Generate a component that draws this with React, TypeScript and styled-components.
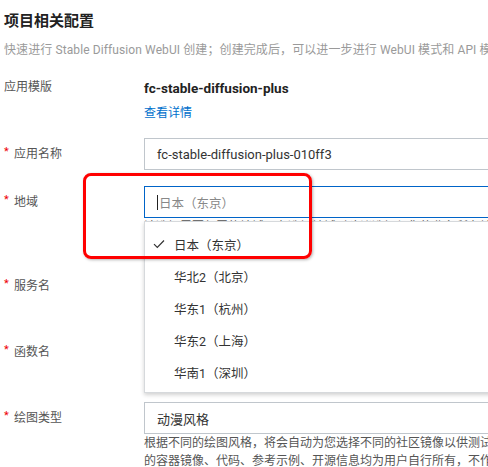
import React from 'react';
import styled, { createGlobalStyle } from 'styled-components';

const GlobalStyle = createGlobalStyle`
  html, body {
    margin: 0;
    padding: 0;
    background: #fff;
    overflow: hidden;
  }
  body {
    font-family: Roboto, "Noto Sans CJK SC", sans-serif;
    color: #333;
  }
`;

const Page = styled.div`
  position: relative;
  width: 820px;
  padding: 10px 0 0 4px;
`;

const Title = styled.h2`
  margin: 0;
  font-size: 15px;
  line-height: 22px;
  font-weight: 700;
  color: #222;
`;

const Subtitle = styled.p`
  margin: 9px 0 0 0;
  font-size: 12px;
  line-height: 18px;
  letter-spacing: 0.1px;
  color: #9a9a9a;
  white-space: nowrap;
`;

const Form = styled.div`
  margin-top: 19px;
`;

const Row = styled.div<{ $gap?: number }>`
  display: grid;
  grid-template-columns: 140px 600px;
  margin-bottom: ${p => p.$gap ?? 16}px;
`;

const Label = styled.div<{ $tall?: boolean }>`
  font-size: 12px;
  line-height: ${p => (p.$tall ? 32 : 18)}px;
  color: #555;
  white-space: nowrap;
`;

const Required = styled.span`
  display: inline-block;
  width: 10px;
  color: #e00;
  font-size: 11px;
  vertical-align: top;
  line-height: 28px;
`;

const Control = styled.div`
  position: relative;
`;

const StaticValue = styled.div`
  margin-top: 1px;
  font-size: 13.5px;
  line-height: 18px;
  font-weight: 700;
  color: #222;
`;

const Link = styled.a`
  display: block;
  margin-top: 7px;
  font-size: 12px;
  line-height: 18px;
  color: #0070cc;
  text-decoration: none;
`;

const Input = styled.div<{ $focus?: boolean }>`
  box-sizing: border-box;
  height: 32px;
  display: flex;
  align-items: center;
  padding: 0 12px;
  border: 1px solid ${p => (p.$focus ? '#0064c8' : '#c0c6cc')};
  font-size: 13px;
  color: #333;
  background: #fff;
`;

const Caret = styled.span`
  display: inline-block;
  width: 1px;
  height: 15px;
  background: #222;
  margin-right: 1px;
`;

const Placeholder = styled.span`
  color: #888;
  font-size: 12.5px;
`;

const Help = styled.div`
  font-size: 12px;
  line-height: 18px;
  color: #555;
  white-space: nowrap;
`;

const Menu = styled.ul`
  position: absolute;
  top: 35px;
  left: 0;
  width: 600px;
  margin: 0;
  padding: 6px 0 4px;
  list-style: none;
  background: #fff;
  border: 1px solid #d6d9dc;
  box-shadow: 0 2px 4px rgba(0, 0, 0, 0.18);
  z-index: 10;
`;

const MenuItem = styled.li`
  display: flex;
  align-items: center;
  height: 32px;
  padding-left: 8px;
  font-size: 12.5px;
  color: #333;
`;

const CheckSlot = styled.span`
  display: inline-flex;
  width: 21px;
  align-items: center;
`;

const Annotation = styled.div`
  position: absolute;
  left: 83px;
  top: 173px;
  width: 229px;
  height: 86px;
  box-sizing: border-box;
  border: 3px solid #ff0000;
  border-radius: 8px;
  box-shadow: 1px 1px 3px rgba(0, 0, 0, 0.3);
  z-index: 20;
  pointer-events: none;
`;

const CheckIcon = () => (
  <svg width="12" height="10" viewBox="0 0 12 10">
    <path d="M1 5.2 L4.3 8.5 L11 1.5" fill="none" stroke="#333" strokeWidth="1.2" />
  </svg>
);

const regions = ['日本（东京）', '华北2（北京）', '华东1（杭州）', '华东2（上海）', '华南1（深圳）'];

export default function App() {
  return (
    <Page>
      <GlobalStyle />
      <Title>项目相关配置</Title>
      <Subtitle>
        快速进行 Stable Diffusion WebUI 创建；创建完成后，可以进一步进行 WebUI 模式和 API 模式的切换
      </Subtitle>
      <Form>
        <Row $gap={16}>
          <Label>应用模版</Label>
          <Control>
            <StaticValue>fc-stable-diffusion-plus</StaticValue>
            <Link>查看详情</Link>
          </Control>
        </Row>
        <Row>
          <Label $tall><Required>*</Required>应用名称</Label>
          <Control>
            <Input>fc-stable-diffusion-plus-010ff3</Input>
          </Control>
        </Row>
        <Row>
          <Label $tall><Required>*</Required>地域</Label>
          <Control>
            <Input $focus>
              <Caret />
              <Placeholder>日本（东京）</Placeholder>
            </Input>
            <Help>请选择需要部署的地域，在选择地域时建议选择与您的业务所在地接近的地域</Help>
            <Help>以获得更好的访问速度</Help>
            <Menu>
              {regions.map((r, i) => (
                <MenuItem key={r}>
                  <CheckSlot>{i === 0 && <CheckIcon />}</CheckSlot>
                  {r}
                </MenuItem>
              ))}
            </Menu>
          </Control>
        </Row>
        <Row>
          <Label $tall><Required>*</Required>服务名</Label>
          <Control>
            <Input>fc-stable-diffusion-plus</Input>
            <Help>服务名称，只能包含字母、数字、下划线和中划线</Help>
          </Control>
        </Row>
        <Row>
          <Label $tall><Required>*</Required>函数名</Label>
          <Control>
            <Input>sd</Input>
            <Help>函数名称，只能包含字母、数字、下划线和中划线</Help>
          </Control>
        </Row>
        <Row>
          <Label $tall><Required>*</Required>绘图类型</Label>
          <Control>
            <Input>动漫风格</Input>
            <Help>根据不同的绘图风格，将会自动为您选择不同的社区镜像以供测试使用，社区镜像中</Help>
            <Help>的容器镜像、代码、参考示例、开源信息均为用户自行所有，不作任何保证</Help>
          </Control>
        </Row>
      </Form>
      <Annotation />
    </Page>
  );
}
